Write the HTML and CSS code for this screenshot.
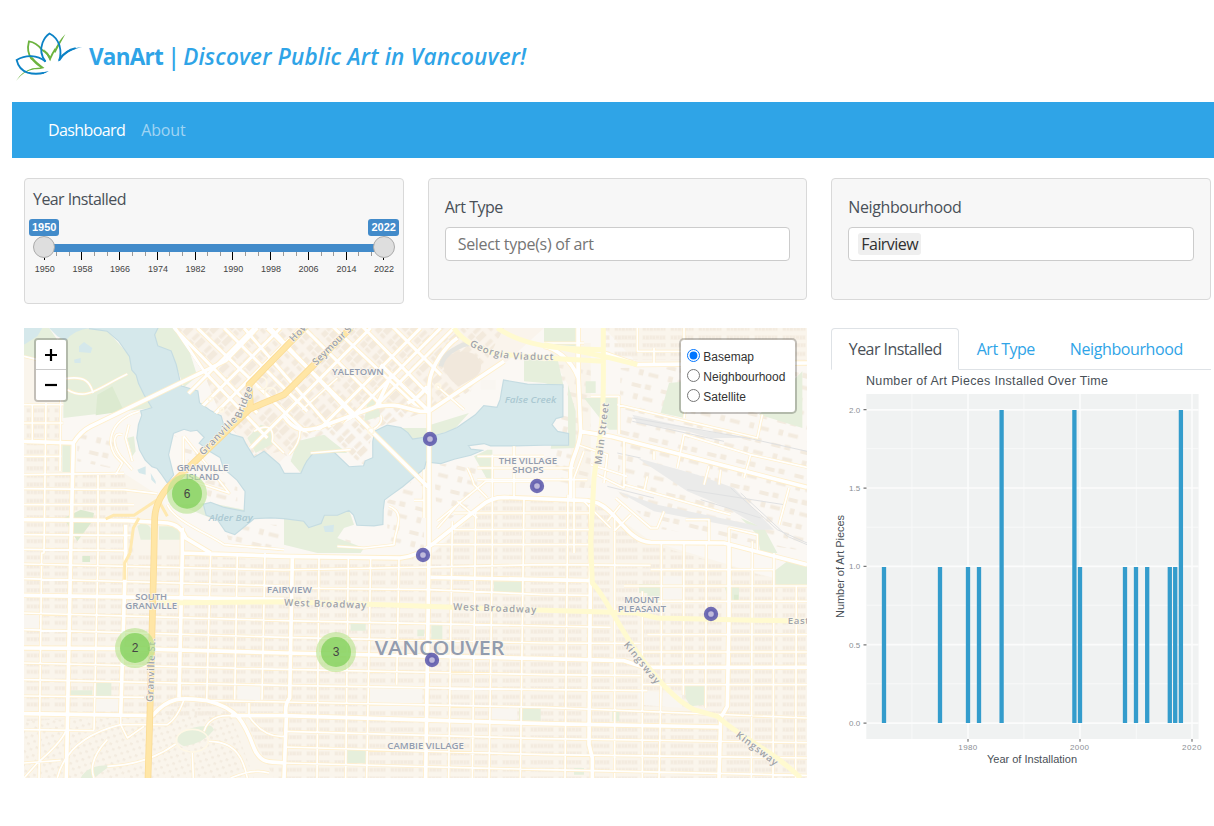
FILE: index.html
```html
<!DOCTYPE html>
<html lang="en">
<head>
<meta charset="utf-8">
<title>VanArt</title>
<link rel="stylesheet" href="styles.css">
</head>
<body>
<header class="header">
  <svg class="logo" viewBox="45 37 202 150">
    <path class="leaf green" d="M96 119C85 105 82 84 87 65C101 67 115 76 126 90C139 98 147 106 151 117C157 103 162 94 167 87"/>
    <path class="green-fill" d="M162 97Q174 66 197 43Q183 68 167 99ZM48 184Q66 155 98 146L122 144Q107 136 91 116L98 113Q110 128 134 145Q118 150 104 149Q72 153 48 184ZM151 124L131 88Q145 98 152 112Z"/>
    <path class="leaf blue" d="M137 126C124 109 121 88 128 69C133 56 140 47 149 41C163 48 174 62 179 77C184 96 183 110 178 123C188 105 205 89 228 85"/>
    <path class="leaf blue" d="M137 126C111 105 78 105 50 121C54 139 65 153 83 159C100 164 117 163 132 160"/>
    <path class="blue-fill" d="M174 127Q186 88 247 82Q202 91 174 127ZM126 159L147 154Q138 162 122 164Z"/>
  </svg>
  <h1 class="title"><b>VanArt</b> <span class="bar">|</span> <i>Discover Public Art in Vancouver!</i></h1>
</header>
<nav class="navbar"><a class="nav-link active">Dashboard</a><a class="nav-link">About</a></nav>

<main class="grid">
  <section class="card year-card">
    <label class="label t-year">Year Installed</label>
    <svg class="slider" width="378" height="66" viewBox="25 216 378 66">
      <rect class="track" x="44" y="244" width="340" height="8"/>
      <path class="tick minor" d="M56.5 252v4M69.5 252v4M94.5 252v4M107.5 252v4M132.5 252v4M145.5 252v4M169.5 252v4M182.5 252v4M207.5 252v4M220.5 252v4M245.5 252v4M258.5 252v4M283.5 252v4M296.5 252v4M321.5 252v4M333.5 252v4M358.5 252v4M371.5 252v4"/>
      <path class="tick" d="M44.5 252v8M81.5 252v8M119.5 252v8M157.5 252v8M195.5 252v8M232.5 252v8M270.5 252v8M308.5 252v8M346.5 252v8M383.5 252v8"/>
      <circle class="handle" cx="44" cy="247" r="10.5"/><circle class="handle" cx="384" cy="247" r="10.5"/>
      <rect class="bubble" x="29" y="219" width="30" height="17" rx="3"/><rect class="bubble" x="368" y="219" width="31" height="17" rx="3"/>
      <g class="bubble-text"><text x="44.2" y="231">1950</text><text x="383.7" y="231">2022</text></g>
      <g class="tick-text"><text x="44.7" y="272">1950</text><text x="82.4" y="272">1958</text><text x="120.1" y="272">1966</text><text x="157.9" y="272">1974</text><text x="195.6" y="272">1982</text><text x="233.3" y="272">1990</text><text x="271" y="272">1998</text><text x="308.6" y="272">2006</text><text x="346.4" y="272">2014</text><text x="384" y="272">2022</text></g>
    </svg>
  </section>
  <section class="card">
    <label class="label t-art">Art Type</label>
    <div class="select"><span class="placeholder">Select type(s) of art</span></div>
  </section>
  <section class="card">
    <label class="label t-area">Neighbourhood</label>
    <div class="select"><span class="chip">Fairview</span></div>
  </section>

  <section class="map">
    <svg class="map-svg" viewBox="0 0 2349 1350">
      <defs>
        <pattern id="houses" width="84" height="49" patternUnits="userSpaceOnUse" patternTransform="translate(0 16)">
          <path class="lot" d="M7 6h70v14H7zM7 29h70v13H7z"/>
          <path class="building" d="M9 8h6v9H9zM18 8h8v10h-8zM30 7h5v10h-5zM38 8h7v9h-7zM48 8h9v8h-9zM60 8h5v10h-5zM68 8h7v9h-7zM9 31h8v9H9zM21 31h5v9h-5zM30 31h8v10h-8zM42 31h5v9h-5zM50 31h9v9h-9zM63 31h5v9h-5zM71 31h5v9h-5z"/>
        </pattern>
        <pattern id="blocks" width="62" height="52" patternUnits="userSpaceOnUse" patternTransform="rotate(-44)">
          <path class="block" d="M8 7h18v16H8zM30 7h25v12H30zM8 28h11v17H8zM24 26h30v18H24z"/>
        </pattern>
        <pattern id="loose" width="90" height="74" patternUnits="userSpaceOnUse" patternTransform="rotate(14)">
          <path class="building" d="M10 12h28v12H10zM50 8h18v16H50zM22 42h14v18H22zM52 46h30v12H52z"/>
        </pattern>
        <pattern id="dots" width="28" height="26" patternUnits="userSpaceOnUse" patternTransform="rotate(25)">
          <path class="building" d="M3 3h8v7H3zM17 15h8v7h-8z"/>
        </pattern>
        <clipPath id="downtown"><path d="M445 0L540 135L470 175L525 225L590 265L620 320L665 350L760 410L790 300L850 315L950 290L1060 235L1150 225L1215 250L1215 180L1290 100L1340 0Z"/></clipPath>
        <path id="water" d="M195 0L250 8L285 38L318 85L325 125L338 140L345 165L362 200L386 240L352 250L355 262L345 290L340 330L348 365L365 395L385 415L400 420L415 440L430 462L447 440L432 380L440 345L447 315L480 302L500 308L520 305L543 328L528 345L560 370L590 388L600 420L640 455L665 490L662 552L600 540L560 525L540 530L548 560L580 572L605 608L632 618L660 595L690 570L740 568L780 570L840 578L855 597L890 585L900 560L940 560L975 545L990 560L1000 590L1050 592L1075 588L1076 545L1080 515L1100 500L1135 475L1200 420L1205 400L1250 405L1290 392L1340 380L1368 368L1340 365L1330 352L1380 345L1400 352L1470 352L1560 350L1632 350L1632 318L1600 312L1582 290L1595 270L1615 265L1615 172L1510 170L1440 158L1435 185L1430 215L1420 240L1380 235L1355 262L1300 300L1265 315L1230 325L1165 335L1150 315L1130 300L1090 293L1055 310L1048 340L1048 390L1025 400L1020 415L975 418L930 375L870 375L850 400L842 415L832 437L780 438L765 410L720 372L690 390L665 350L655 330L620 320L600 300L590 265L560 250L525 225L520 190L470 175L455 110L440 70L400 55L390 20L400 0Z"/>
        <path id="streets" d="M0 230H118M0 285H118M0 385H112M25 228V340M112 40L108 430M66 225L60 675L53 675L45 1350M222 435L222 675L210 1205M0 440L300 436M0 482L300 485L400 497M0 530L330 530M0 620L320 622M0 664L310 668M560 675L548 1120M640 675L632 1115M723 675L714 1115M885 690L879 1350M973 690L965 1350M1040 690L1028 1350M1125 690L1118 1070M1285 580L1274 1350M1355 550L1345 1350M1405 380V675L1395 1350M1500 510L1489 1350M1470 355V510M1632 500L1623 1350M1772 560L1772 880L1772 1350M1855 790L1855 1350M1912 640L1912 1040L1905 1350M1980 640L1978 1100M2047 640L2045 1140M2185 640L2182 1350M2250 675L2247 1350M2317 775L2315 1350
        M0 708L780 726L1560 710L1880 712M0 752L780 774M0 855L780 878L1560 894L1760 898M0 905L780 928L1560 945L1850 946M0 1005L780 1024L1560 1040L1850 1043M0 1055L780 1072L1560 1085L1870 1088M0 1104L360 1108M560 1118L780 1122L1560 1138L2349 1170M0 1205L210 1208M780 1210L1560 1232L2349 1244M780 1257L1560 1280L2349 1290M780 1305L1560 1325L2349 1342M780 780L1215 785L1560 800L1700 802M1360 385H1560M1360 420H1650M1360 455H1690M1290 555H1700M1290 605H1700M1220 650H1700M1880 725H2250M1800 774H2349M1870 820H2349M1870 920H2349M1855 972H2349M1855 1070H2349
        M125 1210Q110 1245 40 1305L0 1350M0 1305L110 1297M100 1350Q130 1230 290 1190L430 1190Q460 1170 480 1115M210 1350Q190 1300 250 1235M290 1165V1190L310 1230L360 1195M505 1275L508 1350M555 1240C640 1240 660 1300 670 1350M250 1315Q370 1310 455 1248M540 1210C555 1160 600 1160 645 1165M675 1125V1165Q720 1230 780 1225M620 1350Q690 1320 735 1335
        M1680 45H1560M1700 205L1785 205L1785 318M1780 230L2200 330L2215 260M1660 350L1750 380L1740 465M1700 410L1810 445M1800 340L1800 480L1720 440M1680 370L1650 450V675M1660 0V140M1840 0V70H1980V0M1890 60V105M2000 150L1980 270M1980 320L1960 420M2180 380L2349 418M1980 320L2180 380L2160 450M1890 370V395M1800 470L2120 560M1870 445L1860 490M2055 415L2040 470M2090 425L2085 470M2295 480L2265 590M1775 510L1880 600H1900L1920 550M1790 530L1750 580M1820 560L1770 610M1985 575H2055V640M2115 650V600L2200 620V675M1680 520L1760 600"/>
        <path id="downtown-streets" d="M300 390L690 0M360 410L770 0M520 310L910 -80M620 420L1040 0M700 490L1190 0M760 490L1250 0M870 420L1290 0M430 -20L700 255M520 0L950 415M600 0L850 250M660 0L990 380M740 0L1010 290M830 -10L1080 240M920 -10L1200 255M1010 -10L1230 215M1100 -10L1300 190M440 -20L540 130L730 330"/>
        <path id="loops" d="M0 85L40 95M125 152C200 140 200 180 208 195M130 185C190 220 220 180 310 138M345 250C290 265 260 300 260 345C265 380 280 390 295 405L275 440M295 320C265 310 265 350 290 385L325 425M315 290L305 330L325 400M478 325V450L615 495L480 325M940 150L835 245M795 380Q830 345 828 305M860 375L980 365M1070 262C1080 290 1050 300 1040 310M1095 535C1150 555 1110 610 1110 650L1020 660L940 655M1200 425V570M1170 517H1200M1330 420C1345 450 1345 450 1350 470L1390 510M1240 600L1310 520M1240 580L1385 460H1560M1300 520L1360 570M1240 175L1320 245M690 310C740 280 750 310 745 340L780 375M430 530C450 580 560 620 600 650L780 665"/>
        <path id="majors" d="M0 340L148 345Q170 310 200 295L540 130L605 98L700 0M148 345L140 675L127 1350M0 575L310 578L430 585Q470 590 485 630L560 675M305 590L305 675L290 1165M475 600V675L465 1108M0 802L780 814M0 960L320 962L780 975L1560 992L1800 998L1860 1018H2349M0 1157L385 1163C440 1100 480 1110 550 1118C640 1140 660 1180 690 1260C710 1310 740 1300 780 1305M620 1163H780L1560 1187L2085 1197M470 675L780 685L1130 690Q1180 685 1230 645L1370 535Q1400 508 1440 508L1690 518L1720 525C1780 550 1810 640 1880 643L2100 645L2349 710M1215 400V675L1205 1350M805 690L797 1110Q780 1130 787 1170L780 1350M1220 748L1560 755L1705 758M780 1160L785 1165M1701 520L1695 1250L1705 1290V1350M2115 650V870L2110 1135L2090 1170L2085 1350
        M780 265C810 310 840 310 880 300L1060 235C1130 225 1130 240 1190 250H1220M1060 230L1100 145M1070 110L1215 250V430M1215 250L1440 100M1215 270V170C1220 110 1270 50 1300 30M1150 225Q1180 215 1210 175M1663 0V150C1640 90 1590 60 1560 55M1663 150L1670 310C1665 370 1640 390 1640 430V510M1670 310L1760 325L2349 478M1740 75L1840 110L2349 105M730 0L1215 480"/>
        <path id="arterials" d="M395 825L780 821L1100 831L1560 847L1840 855L1900 870L2349 880M1738 0V80C1740 300 1730 300 1710 450L1700 640L1705 765C1740 800 1770 870 1830 960C1900 1060 1960 1120 2010 1145L2080 1165C2150 1230 2250 1270 2330 1350M1290 0Q1330 60 1430 78L1560 90L1740 100M1420 0Q1500 55 1640 62L1740 65M1560 50L1740 85L1840 110"/>
        <path id="highway" d="M372 1350L378 1150L390 675L392 570Q395 520 430 480L680 240L675 170L850 -10M660 250L780 200L980 0"/>
        <path id="ramps" d="M245 573L268 562L330 562L400 515M345 570L328 600L318 675M318 675L302 705V755M405 520L430 565"/>
      </defs>
      <rect class="land" width="2349" height="1350"/>
      <path class="urban" d="M0 40H112V430L300 436L400 500L430 540L540 680H1220L1400 510H1700L1880 640L2349 780V1350H0ZM1560 45H1700V480H1640V350L1632 170ZM1740 0H2349V110L1840 105Z"/>
      <path fill="url(#houses)" d="M0 225H112V430H300L330 675L475 680L785 700L1230 675L1400 515H1700L1870 645L2349 780V1350H750L660 1170L390 1160L0 1180ZM1740 0H2349V95H1740Z"/>
      <path fill="url(#dots)" d="M0 1180L380 1165L480 1130L620 1160L690 1350H0Z"/>
      <path fill="url(#loose)" d="M1790 120L2349 110V670L1890 600L1780 490ZM160 300L300 330L260 420L160 400ZM1230 410L1390 400L1380 500L1240 600ZM1570 110H1700V480H1600ZM600 590H980V660H620ZM1090 520L1200 430V660H1090ZM450 320L640 470V520H560Z"/>
      <path class="downtown-land" d="M445 0L540 135L590 265L665 350L760 410L850 315L1060 235L1215 250L1450 100L1560 0Z"/>
      <path fill="url(#blocks)" d="M445 0L540 135L590 265L665 350L690 390L770 370L830 420L845 360L950 370L1020 410L1050 300L1215 250L1340 190L1440 0Z"/>
      <path class="park" d="M0 50L50 0H75L100 35L150 5L200 0L250 8L318 85L345 165L385 240L200 260L118 270V95L0 90ZM388 0H455L495 65L520 145L480 178L455 110L400 55ZM115 348H140V432H115ZM820 340L900 320L970 375L870 375L832 437L800 400ZM1030 225L1050 190L1070 265L1020 280ZM1220 290L1335 255L1290 305L1220 325ZM1120 300H1215V335L1165 335ZM1350 385L1390 365H1405V455H1390ZM780 570L900 560L975 545L990 590L960 600L940 630L1020 660L1010 675H880L780 650ZM1500 80L1560 100L1600 90L1620 180L1560 165L1500 160ZM1560 0H1655V55L1560 48ZM1632 170L1655 250V360L1580 362L1582 350H1632ZM1935 165L1990 160L1982 270L1910 255ZM2205 260L2335 130V300ZM670 330L710 290L745 300L750 345L695 375ZM310 330L330 325L335 370L325 385ZM460 530L560 525L660 545V555L560 570ZM340 595Q360 575 380 600V635H350ZM405 595H470V635H405ZM1680 210H1780V305H1755ZM540 1195Q560 1185 570 1205Q540 1245 480 1255Q440 1235 480 1210Q510 1195 540 1195ZM216 1065H262V1105H216ZM135 1087H205V1103H135ZM170 1350Q190 1310 260 1312L210 1350ZM1410 760H1495V798H1410ZM965 1265H1025V1305H965ZM1485 1140H1550V1178H1485ZM1845 768H1908V805H1870V795H1845ZM2102 778H2145V818H2115ZM2250 730L2290 700L2349 715V770H2255ZM1983 1072H2042V1130L2000 1135L1985 1110ZM980 885H1025V908H980ZM1222 892H1255V935H1222ZM1180 905H1200V925H1180ZM1077 1075H1107V1098H1077ZM1765 1150H1786V1180H1765ZM1650 1320H1680V1340H1650ZM1685 160H1715V195H1685ZM2150 570L2220 600L2260 675H2210L2200 620Z"/>
      <path class="park-dark" d="M220 200L265 175L300 250L215 262ZM120 570L170 545L210 555L205 580L160 640ZM2130 800H2143V816H2130ZM175 684H198V702H175Z"/>
      <path class="plaza" d="M1370 155H1415V185H1370ZM0 860H45V905H0ZM1035 1070H1195V1145H1035ZM215 1105H285V1150H215ZM1400 1135H1480V1175H1400ZM640 1070H715V1120H640ZM1910 745H1975V815H1910ZM1840 1085L1975 1100V1140L1850 1130Z"/>
      <path class="stadium" d="M1255 98Q1270 80 1300 72Q1345 65 1362 90Q1385 125 1350 150L1305 175Q1260 145 1255 98Z"/>
      <use href="#water" class="shore"/><use href="#water" class="water"/>
      <path class="water" d="M0 0H55L40 25L0 50ZM75 0H200Q150 5 125 38L100 25ZM165 55L180 42L205 60L200 75L165 72ZM150 95L170 90V105H152ZM340 425L365 415V440L345 435ZM380 435L395 460V468L382 455ZM898 595L930 590L928 612L903 612Z"/>
      <path class="rail" d="M1825 260L2040 310L2180 330H2060L1990 310L1840 285M1840 390L2020 440L2130 480L2250 605H2220L2110 540L1990 490ZM1780 490L1900 530L2160 585L2250 605L2180 605L1890 550"/>
      <path class="rail-line" d="M1825 270L2180 332L2349 370M1825 280L2100 340M1780 375L1850 390M1750 475L1890 510M2120 480L2260 605L2349 645M2150 495L2290 625L2349 650M1990 485L2280 530M2030 515L2210 570"/>
      <use href="#loops" class="casing c-minor"/><use href="#streets" class="casing c-minor"/><use href="#downtown-streets" class="casing c-mid" clip-path="url(#downtown)"/><use href="#majors" class="casing c-major"/>
      <use href="#loops" class="road r-minor"/><use href="#streets" class="road r-minor"/><use href="#downtown-streets" class="road r-mid" clip-path="url(#downtown)"/><use href="#majors" class="road r-major"/>
      <g class="ring"><circle cx="710" cy="165" r="19"/><circle cx="740" cy="197" r="18"/><circle cx="559" cy="213" r="6"/><circle cx="593" cy="246" r="6"/><circle cx="1242" cy="175" r="8"/><circle cx="1041" cy="309" r="9"/><ellipse cx="505" cy="1238" rx="48" ry="34"/></g>
      <path class="stadium-edge" d="M1250 115Q1260 80 1290 65Q1320 45 1345 48"/>
      <use href="#arterials" class="arterial"/>
      <use href="#ramps" class="ramp"/><use href="#highway" class="highway-edge"/><use href="#highway" class="highway"/>
      <g class="place">
        <text x="458" y="429" textLength="155" lengthAdjust="spacingAndGlyphs">GRANVILLE</text><text x="485" y="456" textLength="101" lengthAdjust="spacingAndGlyphs">ISLAND</text>
        <text x="924" y="142" textLength="155" lengthAdjust="spacingAndGlyphs">YALETOWN</text>
        <text x="1424" y="408" textLength="175" lengthAdjust="spacingAndGlyphs">THE VILLAGE</text><text x="1465" y="435" textLength="94" lengthAdjust="spacingAndGlyphs">SHOPS</text>
        <text x="334" y="816" textLength="95" lengthAdjust="spacingAndGlyphs">SOUTH</text><text x="304" y="843" textLength="155" lengthAdjust="spacingAndGlyphs">GRANVILLE</text>
        <text x="728" y="794" textLength="136" lengthAdjust="spacingAndGlyphs">FAIRVIEW</text>
        <text x="1801" y="824" textLength="105" lengthAdjust="spacingAndGlyphs">MOUNT</text><text x="1781" y="851" textLength="145" lengthAdjust="spacingAndGlyphs">PLEASANT</text>
        <text x="1090" y="1262" textLength="230" lengthAdjust="spacingAndGlyphs">CAMBIE VILLAGE</text>
        <text class="city" x="1052" y="981" textLength="389" lengthAdjust="spacingAndGlyphs">VANCOUVER</text>
      </g>
      <g class="water-name"><text x="1442" y="225" textLength="155" lengthAdjust="spacingAndGlyphs">False Creek</text><text x="554" y="579" textLength="132" lengthAdjust="spacingAndGlyphs">Alder Bay</text></g>
      <g class="street-name">
        <path id="p-geo" d="M1336 52Q1410 98 1520 95L1610 97"/>
        <text><textPath href="#p-geo" textLength="262">Georgia Viaduct</textPath></text>
        <text transform="translate(538 383) rotate(-46)" textLength="150">Granville</text>
        <text transform="translate(650 273) rotate(-69)" textLength="102">Bridge</text>
        <text transform="translate(808 43) rotate(-45)">Howe St.</text>
        <text transform="translate(877 113) rotate(-45)" textLength="175">Seymour St.</text>
        <text transform="translate(1732 411) rotate(-83)" textLength="188">Main Street</text>
        <text transform="translate(387 1122) rotate(-88)" textLength="192">Granville St.</text>
        <text transform="translate(780 833) rotate(2)" textLength="249">West Broadway</text>
        <text transform="translate(1287 846) rotate(2)" textLength="252">West Broadway</text>
        <text x="2291" y="887">East Broadway</text>
        <text transform="translate(1798 951) rotate(51)" textLength="155">Kingsway</text>
        <text transform="translate(2134 1225) rotate(37)" textLength="150">Kingsway</text>
      </g>
      <g class="cluster">
        <circle class="outer" cx="489" cy="497" r="60"/><circle class="inner" cx="489" cy="497" r="45"/><text x="489" y="510">6</text>
        <circle class="outer" cx="333" cy="960" r="60"/><circle class="inner" cx="333" cy="960" r="45"/><text x="333" y="973">2</text>
        <circle class="outer" cx="936" cy="972" r="60"/><circle class="inner" cx="936" cy="972" r="45"/><text x="936" y="985">3</text>
      </g>
      <g class="pin"><circle cx="1218" cy="333" r="15"/><circle cx="1539" cy="474" r="15"/><circle cx="1197" cy="681" r="15"/><circle cx="2061" cy="858" r="15"/><circle cx="1224" cy="996" r="15"/></g>
    </svg>
    <div class="zoom">
      <span class="zoom-btn"><svg width="12" height="12"><path d="M6 0v12M0 6h12"/></svg></span>
      <span class="zoom-btn"><svg width="12" height="12"><path d="M0 6h12"/></svg></span>
    </div>
    <div class="layers">
      <label class="layer"><input type="radio" name="layer" checked>Basemap</label>
      <label class="layer"><input type="radio" name="layer">Neighbourhood</label>
      <label class="layer"><input type="radio" name="layer">Satellite</label>
    </div>
  </section>

  <section class="panel">
    <div class="tabs"><a class="tab selected t-year">Year Installed</a><a class="tab t-art">Art Type</a><a class="tab t-area">Neighbourhood</a></div>
    <svg class="chart" width="380" height="405" viewBox="831 370 380 405">
      <rect class="plot-bg" x="866.3" y="394" width="332.3" height="345"/>
      <path class="grid-minor" d="M911.9 394v345M1023.9 394v345M1136.3 394v345M866.3 448.6h332.3M866.3 527.2h332.3M866.3 605.2h332.3M866.3 683.8h332.3"/>
      <path class="grid-major" d="M968 394v345M1080 394v345M1192 394v345M866.3 409.8h332.3M866.3 488h332.3M866.3 566.4h332.3M866.3 644.7h332.3M866.3 723.2h332.3"/>
      <path class="axis-tick" d="M863.5 409.6h3M863.5 488.1h3M863.5 566.4h3M863.5 644.9h3M863.5 723.2h3M968 739v2.8M1080 739v2.8M1192 739v2.8"/>
      <path class="bars" d="M884 567V723M940 567V723M968 567V723M979 567V723M1001.6 410V723M1074.4 410V723M1080 567V723M1125 567V723M1136 567V723M1147.2 567V723M1169.8 567V723M1175.2 567V723M1180.9 410V723"/>
      <text class="chart-title" x="866" y="385" textLength="242">Number of Art Pieces Installed Over Time</text>
      <g class="axis-label"><text x="849" y="412.8">2.0</text><text x="849" y="491.1">1.5</text><text x="849" y="569.4">1.0</text><text x="849" y="647.8">0.5</text><text x="849" y="726.1">0.0</text><text x="958.3" y="750" textLength="19">1980</text><text x="1070" y="750" textLength="19">2000</text><text x="1182" y="750" textLength="19.5">2020</text></g>
      <text class="axis-title" x="987" y="763" textLength="90">Year of Installation</text>
      <text class="axis-title" transform="translate(844 618) rotate(-90)" textLength="103">Number of Art Pieces</text>
    </svg>
  </section>
</main>
</body>
</html>
```
FILE: styles.css
```css
* { box-sizing: border-box; }
body { margin: 0; width: 1214px; height: 826px; overflow: hidden; background: #fff; color: #495057; font: 16px/24px "Open Sans", "Noto Sans", sans-serif; letter-spacing: -0.15px; }
.header { display: flex; align-items: center; height: 102px; padding: 12px 0 0 15px; }
.logo { width: 67px; height: 50px; flex: none; }
.leaf { fill: none; stroke-width: 5.5; }
.green { stroke: #6cb33f; }
.green-fill { fill: #6cb33f; }
.blue { stroke: #0b82c6; }
.blue-fill { fill: #0b82c6; }
.title { margin: 0 0 0 7px; color: #2fa4e7; font-size: 22.5px; line-height: 30px; font-weight: 600; letter-spacing: 0.18px; white-space: nowrap; }
.title b { font-weight: 700; letter-spacing: -0.75px; }
.bar { font-weight: 600; margin: 0 -3px 0 -1.5px; }
.navbar { display: flex; align-items: center; gap: 16px; height: 56px; margin-left: 12px; padding-left: 36px; background: #2fa4e7; }
.nav-link { color: rgba(255,255,255,.55); }
.nav-link.active { color: #fff; letter-spacing: -0.6px; }
.grid { display: grid; grid-template-columns: repeat(3, minmax(0, 1fr)); column-gap: 24px; row-gap: 24px; margin: 20px 3px 0 24px; align-items: start; }
.card { height: 122px; padding: 16px; border: 1px solid #d9d9d9; border-radius: 4px; background: #f7f7f7; }
.year-card { height: 126px; padding: 8px 0; }
.label { display: block; }
.t-year { letter-spacing: -0.57px; }
.t-art { letter-spacing: -0.5px; }
.t-area { letter-spacing: -0.4px; }
.year-card .label { padding-left: 8px; }
.slider { display: block; margin-top: 5px; }
.track, .bubble { fill: #428bca; }
.tick { stroke: #000; stroke-width: 1; }
.minor { stroke: #999; }
.handle { fill: #dedede; stroke: #aaa; }
.bubble-text { font: bold 11px "Liberation Sans", sans-serif; fill: #fff; text-anchor: middle; letter-spacing: 0; }
.tick-text { font: 9px "Liberation Sans", sans-serif; fill: #444; text-anchor: middle; letter-spacing: 0; }
.select { display: flex; align-items: center; height: 34px; margin-top: 8px; padding: 0 12px; border: 1px solid #ccc; border-radius: 4px; background: #fff; }
.placeholder { color: #757575; letter-spacing: -0.3px; }
.chip { margin-left: -3px; padding: 0 3px; height: 22px; line-height: 22px; border-radius: 3px; background: #efefef; color: #303030; letter-spacing: -0.55px; }
.map { position: relative; grid-column: span 2; height: 450px; overflow: hidden; }
.map-svg { display: block; width: 783px; height: 450px; letter-spacing: 0; }
.land { fill: #fbf8f4; }
.urban { fill: #faf5ec; }
.downtown-land { fill: #faf4ec; }
.lot { fill: #f7f0e6; }
.building { fill: #f3ebdf; }
.block { fill: #f3eadd; }
.park { fill: #e6efdc; }
.park-dark { fill: #dcead0; }
.plaza { fill: #f9f6f1; }
.stadium { fill: #f1e8dc; }
.stadium-edge { fill: none; stroke: #e5e5e0; stroke-width: 14; }
.water { fill: #d5e8eb; }
.shore { fill: none; stroke: #c5dce2; stroke-width: 7; }
.rail { fill: #ebebea; }
.rail-line { fill: none; stroke: #e0e1e2; stroke-width: 3; }
.casing, .road, .arterial, .highway, .highway-edge, .ramp, .ring { fill: none; stroke-linejoin: round; }
.casing { stroke: #ffefcb; }
.road { stroke: #fff; }
.c-minor { stroke-width: 9; }
.r-minor { stroke-width: 5; }
.c-mid { stroke-width: 14; }
.r-mid { stroke-width: 9; }
.c-major { stroke-width: 16; }
.r-major { stroke-width: 11; }
.ring { stroke: #fff8e6; stroke-width: 5; }
.arterial { stroke: #fffad0; stroke-width: 15; }
.ramp { stroke: #ffe9b0; stroke-width: 9; }
.highway-edge { stroke: #fbdc96; stroke-width: 20; }
.highway { stroke: #ffe6a6; stroke-width: 15; }
.place, .street-name, .water-name { font-family: "Open Sans", sans-serif; fill: #929cae; stroke: #fbf7f0; stroke-width: 4; paint-order: stroke; }
.place { font-size: 26.5px; font-weight: 600; }
.place .city { font-size: 59px; }
.street-name { font-size: 29px; font-weight: 600; fill: #a0a3a6; letter-spacing: 2px; }
.street-name path { fill: none; stroke: none; }
.water-name { font-size: 26px; font-style: italic; font-weight: 600; fill: #abc8d2; stroke: none; }
.cluster text { font: 36px "Liberation Sans", sans-serif; text-anchor: middle; fill: #444; }
.outer { fill: #b5e28c; fill-opacity: .6; }
.inner { fill: #80d05a; fill-opacity: .75; }
.pin circle { fill: #bfbadb; stroke: #5d5aac; stroke-width: 13; stroke-opacity: .88; }
.zoom { position: absolute; top: 10px; left: 10px; width: 34px; border: 2px solid rgba(0,0,0,.22); border-radius: 4px; background-clip: padding-box; }
.zoom-btn { display: flex; align-items: center; justify-content: center; height: 30px; background: #fff; border-radius: 0 0 2px 2px; }
.zoom-btn:first-child { border-bottom: 1px solid #ccc; border-radius: 2px 2px 0 0; }
.zoom-btn path { stroke: #000; stroke-width: 2.2; }
.layers { position: absolute; top: 10px; right: 10px; width: 118px; height: 76px; padding: 6px; border: 2px solid rgba(0,0,0,.22); border-radius: 5px; background: #fff; background-clip: padding-box; font: 12px/20px "Liberation Sans", sans-serif; color: #333; letter-spacing: 0; }
.layer { display: flex; align-items: center; height: 20px; position: relative; top: 1px; }
.layer input { width: 13px; height: 13px; margin: -3px 3px 0 0; flex: none; }
.tabs { display: flex; height: 42px; border-bottom: 1px solid #dee2e6; }
.tab { height: 42px; padding: 8px 16.5px 0; border: 1px solid transparent; color: #2fa4e7; white-space: nowrap; }
.selected { color: #495057; background: #fff; border-color: #dee2e6 #dee2e6 #fff; border-radius: 4px 4px 0 0; }
.chart { display: block; font-family: "Liberation Sans", sans-serif; letter-spacing: 0; }
.plot-bg { fill: #f0f2f2; }
.grid-minor { stroke: #f8f9f9; stroke-width: 1; }
.grid-major { stroke: #fbfcfc; stroke-width: 1.7; }
.axis-tick { stroke: #777; stroke-width: 1.2; }
.bars { stroke: #339ccc; stroke-width: 4.3; }
.chart-title { font-size: 12.5px; fill: #495057; }
.axis-label { font-size: 8px; fill: #8a8f94; }
.axis-title { font-size: 11px; fill: #495057; }
```
